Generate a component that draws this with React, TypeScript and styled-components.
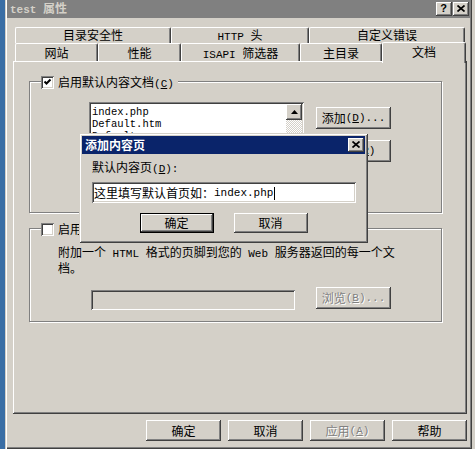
import styled, { createGlobalStyle, css } from "styled-components";

const FACE = "#d4d0c8";

const GlobalStyle = createGlobalStyle`
  html, body {
    margin: 0;
    padding: 0;
  }
  body {
    background: ${FACE};
    font-family: "Noto Sans CJK SC", "Liberation Sans", sans-serif;
    font-size: 12px;
    color: #000;
  }
`;

const raised = css`
  box-shadow: inset -1px -1px #404040, inset 1px 1px #ffffff,
    inset -2px -2px #808080, inset 2px 2px ${FACE};
`;

const sunken = css`
  box-shadow: inset 1px 1px #808080, inset -1px -1px #ffffff,
    inset 2px 2px #404040, inset -2px -2px ${FACE};
`;

const windowEdge = css`
  box-shadow: inset 1px 1px ${FACE}, inset -1px -1px #404040,
    inset 2px 2px #ffffff, inset -2px -2px #808080;
`;

export default function App() {
  return (
    <>
      <GlobalStyle />
      <Desktop>
        <Window>
          <TitleBar $active={false}>
            <TitleText>
              <En $size={11}>test </En>属性
            </TitleText>
            <Caption>
              <CaptionButton>
                <Help>?</Help>
              </CaptionButton>
              <CaptionButton>
                <CloseGlyph />
              </CaptionButton>
            </Caption>
          </TitleBar>

          <Body>
            <TabRow>
              <Tab $w={156}>目录安全性</Tab>
              <Tab $w={138}>
                <En>HTTP </En>头
              </Tab>
              <Tab $w={156}>自定义错误</Tab>
            </TabRow>
            <TabRow $front>
              <Tab $w={83} $front>
                网站
              </Tab>
              <Tab $w={83} $front>
                性能
              </Tab>
              <Tab $w={119} $front>
                <En>ISAPI </En>筛选器
              </Tab>
              <Tab $w={82} $front>
                主目录
              </Tab>
              <Tab $w={84} $front $active>
                文档
              </Tab>
            </TabRow>

            <Panel>
              <Group $h={132}>
                <Legend>
                  <CheckBox>
                    <CheckMark />
                  </CheckBox>
                  <span>
                    启用默认内容文档
                    <En>
                      (<u>C</u>)
                    </En>
                  </span>
                </Legend>
                <DocRow>
                  <ListBox>
                    <Items>
                      <Item>index.php</Item>
                      <Item>Default.htm</Item>
                      <Item>Default.asp</Item>
                    </Items>
                    <ScrollBar>
                      <ScrollButton>
                        <ArrowUp />
                      </ScrollButton>
                      <Track />
                    </ScrollBar>
                  </ListBox>
                  <ButtonColumn>
                    <Button $w={75} $h={22}>
                      添加
                      <En>
                        (<u>D</u>)...
                      </En>
                    </Button>
                    <Button $w={75} $h={22}>
                      删除
                      <En>
                        (<u>R</u>)
                      </En>
                    </Button>
                  </ButtonColumn>
                </DocRow>
              </Group>

              <Group $h={94}>
                <Legend>
                  <CheckBox />
                  <span>
                    启用文档页脚
                    <En>
                      (<u>O</u>)
                    </En>
                  </span>
                </Legend>
                <Note>
                  附加一个<En> HTML </En>格式的页脚到您的<En> Web </En>
                  服务器返回的每一个文
                  <br />
                  档。
                </Note>
                <FooterRow>
                  <Field $w={204} $h={20} $disabled />
                  <Button $w={75} $h={22} $disabled>
                    浏览
                    <En>
                      (<u>B</u>)...
                    </En>
                  </Button>
                </FooterRow>
              </Group>
            </Panel>

            <Actions>
              <Button $w={75} $h={21}>
                确定
              </Button>
              <Button $w={75} $h={21}>
                取消
              </Button>
              <Button $w={75} $h={21} $disabled>
                应用
                <En>
                  (<u>A</u>)
                </En>
              </Button>
              <Button $w={75} $h={21}>
                帮助
              </Button>
            </Actions>
          </Body>
        </Window>

        <Dialog>
          <TitleBar $active>
            <TitleText>添加内容页</TitleText>
            <Caption>
              <CaptionButton>
                <CloseGlyph />
              </CaptionButton>
            </Caption>
          </TitleBar>
          <DialogBody>
            <FieldLabel>
              默认内容页
              <En>
                (<u>D</u>):
              </En>
            </FieldLabel>
            <Field $w={264} $h={21}>
              这里填写默认首页如：<En>index.php</En>
              <Caret />
            </Field>
            <DialogButtons>
              <Button $w={74} $h={20} $default>
                确定
              </Button>
              <Button $w={74} $h={20}>
                取消
              </Button>
            </DialogButtons>
          </DialogBody>
        </Dialog>
      </Desktop>
    </>
  );
}

function CloseGlyph() {
  return (
    <svg width="8" height="7" viewBox="0 0 8 7">
      <path d="M0.5 0.5 L7.5 6.5 M7.5 0.5 L0.5 6.5" stroke="#000" strokeWidth="1.7" />
    </svg>
  );
}

function CheckMark() {
  return (
    <svg width="9" height="9" viewBox="0 0 9 9">
      <path d="M1.5 3.5 L3.5 5.5 L7.5 1.5" stroke="#000" strokeWidth="2" fill="none" />
    </svg>
  );
}

function ArrowUp() {
  return (
    <svg width="7" height="4" viewBox="0 0 7 4">
      <path d="M3.5 0 L7 4 L0 4 Z" fill="#000" />
    </svg>
  );
}

const Desktop = styled.div`
  position: relative;
  width: 475px;
  height: 449px;
  overflow: hidden;
  background: linear-gradient(to right, #3a6ea5 5px, ${FACE} 5px);
`;

const Window = styled.div`
  box-sizing: border-box;
  margin-left: 5px;
  width: 467px;
  height: 449px;
  padding: 0 2px;
  background: ${FACE};
  display: flex;
  flex-direction: column;
  box-shadow: inset 1px 0 ${FACE}, inset 2px 0 #ffffff, inset -1px -1px #404040,
    inset -2px -2px #808080;
`;

const TitleBar = styled.div<{ $active: boolean }>`
  height: 18px;
  flex: none;
  display: flex;
  align-items: center;
  justify-content: space-between;
  padding: 0 1px 0 3px;
  background: ${(p) => (p.$active ? "#0a246a" : "#808080")};
  color: ${(p) => (p.$active ? "#ffffff" : FACE)};
`;

const TitleText = styled.div`
  font-weight: bold;
  line-height: 14px;
  white-space: nowrap;
`;

const Caption = styled.div`
  display: flex;
  gap: 1px;
`;

const CaptionButton = styled.div`
  width: 16px;
  height: 14px;
  background: ${FACE};
  ${raised};
  display: flex;
  align-items: center;
  justify-content: center;
  padding: 0 1px 1px 0;
  box-sizing: border-box;
`;

const Help = styled.span`
  font-family: "Liberation Sans", sans-serif;
  font-weight: bold;
  font-size: 11px;
  line-height: 11px;
  color: #000;
`;

const En = styled.span<{ $size?: number }>`
  font-family: "Liberation Mono", "DejaVu Sans Mono", monospace;
  font-size: ${(p) => p.$size ?? 11}px;
  white-space: pre;
`;

const Body = styled.div`
  display: flex;
  flex-direction: column;
  padding: 9px 3px 0 6px;
`;

const TabRow = styled.div<{ $front?: boolean }>`
  display: flex;
  height: ${(p) => (p.$front ? 18 : 16)}px;
  padding-left: 2px;
  align-items: flex-start;
`;

const Tab = styled.div<{ $w: number; $front?: boolean; $active?: boolean }>`
  box-sizing: border-box;
  flex: none;
  width: ${(p) => p.$w}px;
  height: ${(p) => (p.$active ? 21 : p.$front ? 18 : 16)}px;
  margin-top: ${(p) => (p.$active ? -1 : 0)}px;
  padding-top: ${(p) => (p.$front ? 2 : 0)}px;
  line-height: 14px;
  text-align: center;
  white-space: nowrap;
  background: ${FACE};
  border-top: 1px solid #ffffff;
  border-left: 1px solid #ffffff;
  border-right: 1px solid #404040;
  border-radius: 2px 2px 0 0;
  box-shadow: inset -1px 0 #808080;
  position: ${(p) => (p.$active ? "relative" : "static")};
  z-index: ${(p) => (p.$active ? 1 : "auto")};
`;

const Panel = styled.div`
  box-sizing: border-box;
  width: 454px;
  height: 353px;
  padding: 20px 0 0 16px;
  display: flex;
  flex-direction: column;
  gap: 15px;
  background: ${FACE};
  box-shadow: inset -1px -1px #404040, inset 1px 1px #ffffff,
    inset -2px -2px #808080;
`;

const Group = styled.div<{ $h: number }>`
  box-sizing: border-box;
  width: 413px;
  height: ${(p) => p.$h}px;
  border: 1px solid #808080;
  box-shadow: inset 1px 1px #ffffff, 1px 1px #ffffff;
  display: flex;
  flex-direction: column;
  align-items: flex-start;
`;

const Legend = styled.div`
  display: flex;
  align-items: center;
  gap: 4px;
  height: 13px;
  margin: -6px 0 0 11px;
  padding-right: 4px;
  background: ${FACE};
  line-height: 13px;
  white-space: nowrap;
`;

const CheckBox = styled.div`
  box-sizing: border-box;
  width: 13px;
  height: 13px;
  flex: none;
  background: #ffffff;
  ${sunken};
  display: flex;
  align-items: center;
  justify-content: center;
`;

const DocRow = styled.div`
  display: flex;
  margin: 13px 0 0 59px;
`;

const ListBox = styled.div`
  box-sizing: border-box;
  width: 215px;
  height: 88px;
  padding: 2px;
  background: #ffffff;
  ${sunken};
  display: flex;
`;

const Items = styled.div`
  flex: 1;
  padding: 2px 1px 0;
  overflow: hidden;
`;

const Item = styled.div`
  font-family: "Liberation Mono", "DejaVu Sans Mono", monospace;
  font-size: 10.5px;
  line-height: 12px;
`;

const ScrollBar = styled.div`
  width: 16px;
  display: flex;
  flex-direction: column;
`;

const ScrollButton = styled.div`
  width: 16px;
  height: 16px;
  flex: none;
  background: ${FACE};
  ${raised};
  display: flex;
  align-items: center;
  justify-content: center;
`;

const Track = styled.div`
  flex: 1;
  background-color: #ffffff;
  background-image: conic-gradient(${FACE} 25%, #ffffff 0 50%, ${FACE} 0 75%, #ffffff 0);
  background-size: 2px 2px;
`;

const ButtonColumn = styled.div`
  display: flex;
  flex-direction: column;
  gap: 11px;
  margin: 5px 0 0 12px;
`;

const Button = styled.div<{
  $w: number;
  $h: number;
  $disabled?: boolean;
  $default?: boolean;
}>`
  box-sizing: border-box;
  flex: none;
  width: ${(p) => p.$w}px;
  height: ${(p) => p.$h}px;
  display: flex;
  align-items: center;
  justify-content: center;
  white-space: nowrap;
  line-height: 14px;
  background: ${FACE};
  ${raised};
  border: ${(p) => (p.$default ? "1px solid #000" : "none")};
  color: ${(p) => (p.$disabled ? "#808080" : "#000")};
  text-shadow: ${(p) => (p.$disabled ? "1px 1px #ffffff" : "none")};
`;

const Note = styled.div`
  margin: 9px 0 0 28px;
  line-height: 13px;
  white-space: nowrap;
`;

const FooterRow = styled.div`
  display: flex;
  align-items: flex-start;
  gap: 21px;
  margin: 13px 0 0 61px;
`;

const Field = styled.div<{ $w: number; $h: number; $disabled?: boolean }>`
  box-sizing: border-box;
  width: ${(p) => p.$w}px;
  height: ${(p) => p.$h}px;
  margin-top: ${(p) => (p.$disabled ? 3 : 0)}px;
  padding: 1px 2px 0;
  line-height: 16px;
  white-space: nowrap;
  display: flex;
  align-items: center;
  background: ${(p) => (p.$disabled ? FACE : "#ffffff")};
  ${sunken};
`;

const Caret = styled.span`
  display: inline-block;
  width: 1px;
  height: 13px;
  background: #000;
  margin-left: 1px;
`;

const Actions = styled.div`
  display: flex;
  justify-content: flex-end;
  gap: 7px;
  margin-top: 6px;
`;

const Dialog = styled.div`
  position: absolute;
  left: 79px;
  top: 133px;
  box-sizing: border-box;
  width: 289px;
  height: 110px;
  padding: 3px;
  background: ${FACE};
  ${windowEdge};
  display: flex;
  flex-direction: column;
`;

const DialogBody = styled.div`
  display: flex;
  flex-direction: column;
  padding: 6px 10px 0;
`;

const FieldLabel = styled.div`
  line-height: 14px;
  margin-bottom: 6px;
  white-space: nowrap;
`;

const DialogButtons = styled.div`
  display: flex;
  justify-content: center;
  gap: 20px;
  margin-top: 10px;
`;
